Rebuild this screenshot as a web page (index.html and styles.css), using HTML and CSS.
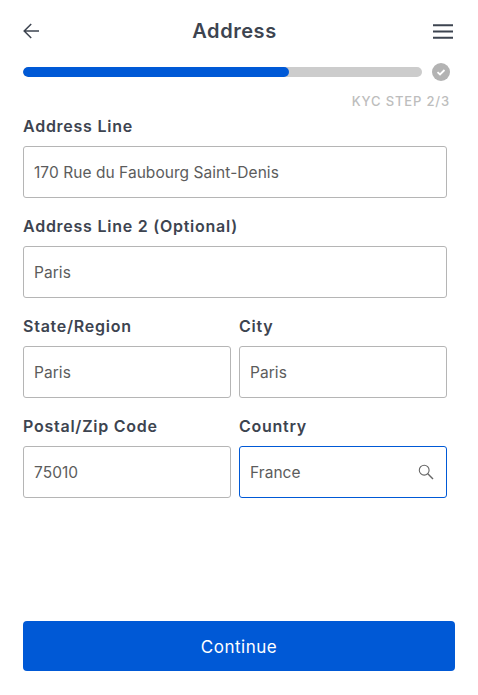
FILE: index.html
```html
<!DOCTYPE html>
<html lang="en">
<head>
<meta charset="utf-8">
<title>Address</title>
<link rel="stylesheet" href="styles.css">
</head>
<body>
<main class="screen">
  <header class="topbar">
    <svg class="icon-back" width="16" height="16" viewBox="0 0 16 16"><path d="M16 8H1.2M8.2 1 1.2 8l7 7" fill="none" stroke="#3d4450" stroke-width="1.5"/></svg>
    <h1 class="title">Address</h1>
    <svg class="icon-menu" width="20" height="15" viewBox="0 0 20 15"><path d="M0 1.2h20M0 7.5h20M0 13.8h20" stroke="#3d4450" stroke-width="2"/></svg>
  </header>
  <div class="progress-row">
    <div class="track"><div class="fill"></div></div>
    <svg class="check" width="18" height="18" viewBox="0 0 18 18"><circle cx="9" cy="9" r="9" fill="#b3b3b3"/><path d="M5.5 9.2 8 11.5l4.5-4.5" fill="none" stroke="#fff" stroke-width="1.8"/></svg>
  </div>
  <div class="step">KYC STEP 2/3</div>
  <form class="form">
    <div class="field full"><label class="label">Address Line</label><div class="input">170 Rue du Faubourg Saint-Denis</div></div>
    <div class="field full"><label class="label">Address Line 2 (Optional)</label><div class="input">Paris</div></div>
    <div class="field"><label class="label">State/Region</label><div class="input">Paris</div></div>
    <div class="field"><label class="label">City</label><div class="input">Paris</div></div>
    <div class="field"><label class="label">Postal/Zip Code</label><div class="input">75010</div></div>
    <div class="field"><label class="label">Country</label><div class="input focused">France
      <svg class="icon-search" width="16" height="16" viewBox="0 0 16 16"><circle cx="6.2" cy="6.2" r="4.9" fill="none" stroke="#666" stroke-width="1.1"/><path d="m9.8 9.8 5.2 5.2" stroke="#666" stroke-width="1.4"/></svg>
    </div></div>
  </form>
  <button class="cta" type="button">Continue</button>
</main>
</body>
</html>
```
FILE: styles.css
```css
* { box-sizing: border-box; }
html, body { margin: 0; height: 100%; background: #fff; }
.screen {
  width: 478px; height: 695px; padding: 0 23px;
  display: flex; flex-direction: column;
  font-family: Inter, "Liberation Sans", sans-serif;
  color: #3d4450;
}
.topbar { height: 62px; display: flex; align-items: center; justify-content: space-between; padding-right: 2px; }
.title { margin: 0 3px 0 0; font-size: 20px; line-height: 24px; font-weight: 600; letter-spacing: .55px; }
.progress-row { display: flex; align-items: center; gap: 10px; height: 20px; }
.track { width: 399px; height: 10px; border-radius: 5px; background: #cccccc; overflow: hidden; }
.fill { width: 266px; height: 100%; border-radius: 5px; background: #0059d6; }
.step { margin-top: 11px; padding-right: 5px; text-align: right; font-size: 13px; line-height: 16px; font-weight: 500; letter-spacing: .85px; color: #bdbdbd; }
.form { display: grid; grid-template-columns: 208px 208px; column-gap: 8px; row-gap: 19px; margin-top: 8px; }
.full { grid-column: 1 / -1; }
.label { display: block; height: 22px; font-size: 16px; line-height: 18px; font-weight: 600; letter-spacing: .75px; margin-bottom: 7px; }
.input {
  height: 52px; padding: 0 12px 0 10px; border: 1px solid #b5b5b5; border-radius: 3px;
  display: flex; align-items: center; justify-content: space-between;
  font-size: 15.5px; letter-spacing: .05px; color: #5c5c5c; background: #fff;
}
.focused { border-color: #0059d6; }
.cta {
  margin-top: 123px; width: 432px; height: 50px; padding: 2px 0 0; border: 0; border-radius: 4px;
  background: #0059d6; color: #fff; font: 400 17px Inter, "Liberation Sans", sans-serif; letter-spacing: .5px;
}
```
